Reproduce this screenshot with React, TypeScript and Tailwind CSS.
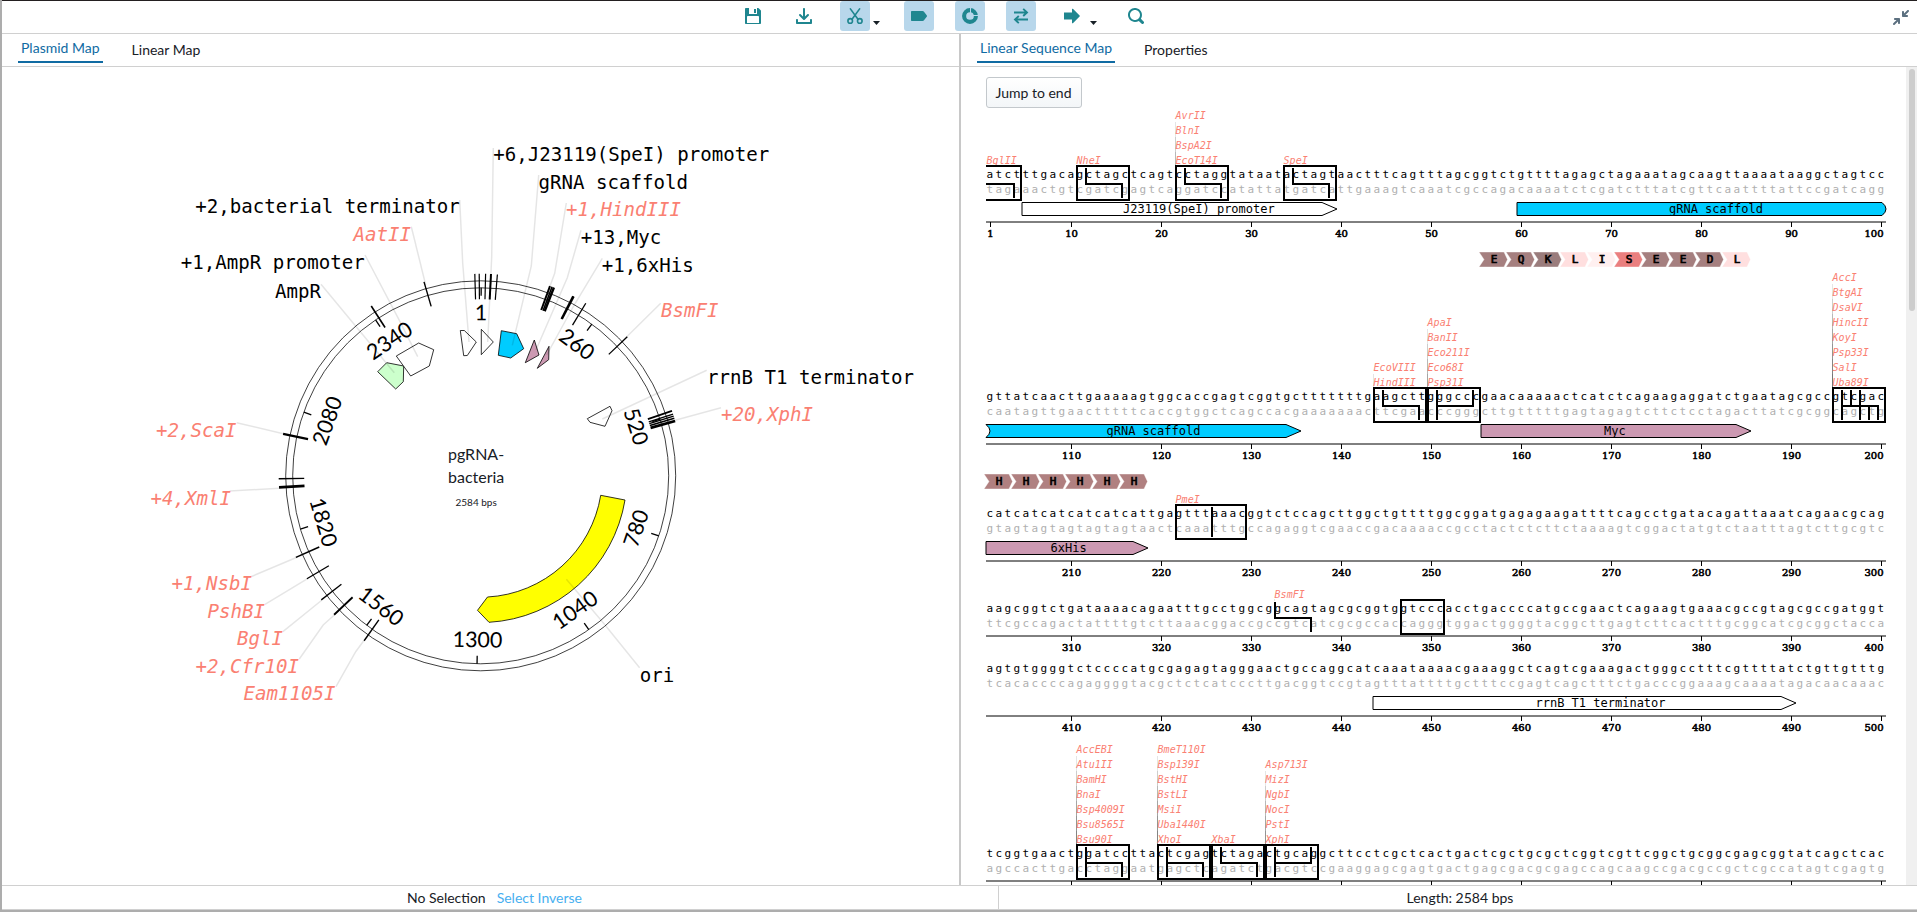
import React from "react";

const MONO = '"DejaVu Sans Mono", monospace';
const SERIF = '"DejaVu Serif", serif';
const LATO = "Lato, sans-serif";
const SALMON = "#fa8072";
const TEAL = "#1f868f";

/* ---------- toolbar ---------- */

function Glyph({ d, size = 16, color = TEAL }: { d: string; size?: number; color?: string }) {
  return (
    <svg width={size} height={size} viewBox="0 0 16 16" fill={color} fillRule="evenodd">
      <path d={d} />
    </svg>
  );
}

const ICONS = {
  save: "M15.71 2.29l-2-2A.997.997 0 0013 0h-1v6H4V0H1C.45 0 0 .45 0 1v14c0 .55.45 1 1 1h14c.55 0 1-.45 1-1V3c0-.28-.11-.53-.29-.71zM14 15H2V9c0-.55.45-1 1-1h10c.55 0 1 .45 1 1v6zM11 1H9v4h2V1z",
  download:
    "M7.29 11.71c.18.18.43.29.71.29s.53-.11.71-.29l4-4a1.003 1.003 0 00-1.42-1.42L9 8.59V1c0-.55-.45-1-1-1S7 .45 7 1v7.59l-2.29-2.3a1.003 1.003 0 00-1.42 1.42l4 4zM15 11c-.55 0-1 .45-1 1v2H2v-2c0-.55-.45-1-1-1s-1 .45-1 1v3c0 .55.45 1 1 1h14c.55 0 1-.45 1-1v-3c0-.55-.45-1-1-1z",
  tag: "M1 3h10.6c.5 0 .9.2 1.2.5l2.9 3.7c.4.5.4 1.1 0 1.6l-2.9 3.7c-.3.3-.7.5-1.2.5H1c-.6 0-1-.4-1-1V4c0-.6.4-1 1-1z",
  search:
    "M15.55 13.43l-2.67-2.68a6.94 6.94 0 001.11-3.76c0-3.87-3.13-7-7-7s-7 3.13-7 7 3.13 7 7 7c1.39 0 2.68-.42 3.76-1.11l2.68 2.67a1.498 1.498 0 102.12-2.12zm-8.56-1.44c-2.76 0-5-2.24-5-5s2.24-5 5-5 5 2.24 5 5-2.24 5-5 5z",
  arrow: "M0 4.6h8V1.2c0-.5.5-.7.9-.4l6.7 6.6c.4.3.4.8 0 1.2l-6.7 6.6c-.4.3-.9.1-.9-.4v-3.4H0z",
  minimize:
    "M6 8H2c-.55 0-1 .45-1 1s.45 1 1 1h1.590L.29 13.290a1.003 1.003 0 001.420 1.420L5 11.410V13c0 .55.45 1 1 1s1-.45 1-1V9c0-.55-.45-1-1-1zm9.710-7.710a1.003 1.003 0 00-1.420 0L11 3.590V2c0-.55-.45-1-1-1s-1 .45-1 1v4c0 .55.45 1 1 1h4c.55 0 1-.45 1-1s-.45-1-1-1h-1.590l3.300-3.290c.39-.39.39-1.030 0-1.420z",
};

function Scissors() {
  return (
    <svg width="16" height="16" viewBox="0 0 16 16" fill="none" stroke={TEAL} strokeWidth="1.6">
      <path d="M3 0.400L10.800 11M13 0.400L5.200 11" />
      <circle cx="3.200" cy="12.900" r="2.300" />
      <circle cx="12.800" cy="12.900" r="2.300" />
    </svg>
  );
}

function Donut() {
  return (
    <svg width="16" height="16" viewBox="0 0 16 16" fill="none">
      <circle cx="8" cy="8" r="5.900" stroke={TEAL} strokeWidth="4.100" />
      <path d="M8.500 0V5M11 7.500H16" stroke="#b8d7eb" strokeWidth="1" />
    </svg>
  );
}

function Swap() {
  return (
    <svg width="16" height="16" viewBox="0 0 16 16" fill="none" stroke={TEAL} strokeWidth="1.900">
      <path d="M1 4.500H13.500M10.200 0.900L14 4.500L10.200 8M15 11.500H2.500M5.800 8L2 11.500L5.800 15.100" />
    </svg>
  );
}

function ToolButton({ active = false, children }: { active?: boolean; children: React.ReactNode }) {
  return (
    <button
      className={
        active
          ? "flex h-[30px] w-[30px] items-center justify-center rounded-[3px] bg-[#b8d7eb]"
          : "flex h-[30px] w-[30px] items-center justify-center rounded-[3px]"
      }
    >
      {children}
    </button>
  );
}

function Caret() {
  return (
    <svg width="7" height="4" viewBox="0 0 7 4" className="mt-[14px]" fill="#182026">
      <path d="M0 0H7L3.500 4z" />
    </svg>
  );
}

function Toolbar() {
  return (
    <header className="flex h-[34px] shrink-0 border-t border-b border-t-[#231f20] border-b-[#d0d0d0]">
      <div className="flex flex-1 items-start pl-[736px]">
        <ToolButton>
          <Glyph d={ICONS.save} />
        </ToolButton>
        <div className="ml-[21px]">
          <ToolButton>
            <Glyph d={ICONS.download} />
          </ToolButton>
        </div>
        <div className="ml-[21px] flex items-center gap-[3px]">
          <ToolButton active>
            <Scissors />
          </ToolButton>
          <Caret />
        </div>
        <div className="ml-[24px] flex gap-[21px]">
          <ToolButton active>
            <Glyph d={ICONS.tag} />
          </ToolButton>
          <ToolButton active>
            <Donut />
          </ToolButton>
          <ToolButton active>
            <Swap />
          </ToolButton>
        </div>
        <div className="ml-[21px] flex items-center gap-[3px]">
          <ToolButton>
            <Glyph d={ICONS.arrow} />
          </ToolButton>
          <Caret />
        </div>
        <div className="ml-[24px]">
          <ToolButton>
            <Glyph d={ICONS.search} />
          </ToolButton>
        </div>
      </div>
      <div className="pt-[9px] pr-[8px]">
        <Glyph d={ICONS.minimize} color="#5c7080" />
      </div>
    </header>
  );
}

function Tabs({ active, other }: { active: string; other: string }) {
  return (
    <nav className="flex h-[33px] shrink-0 items-start gap-[26px] border-b border-[#d0d0d0] pl-4 text-[14px]">
      <button className="h-[29px] border-b-2 border-[#106ba3] px-[3px] text-[#106ba3]">
        <span className="block h-[27px] leading-[28px]">{active}</span>
      </button>
      <button className="h-[32px] px-[3px] leading-[32px] text-[#182026]">{other}</button>
    </nav>
  );
}

/* ---------- plasmid map ---------- */

const CX = 480.7;
const CY = 475.8;
const BP = 2584;

const at = (bp: number, r: number) => {
  const a = (bp / BP) * 2 * Math.PI;
  return [CX + r * Math.sin(a), CY - r * Math.cos(a)];
};

const AXIS_TICKS = [1, 260, 520, 780, 1040, 1300, 1560, 1820, 2080, 2340];

const CUTS: [number, number][] = [
  [2572, 1.2], [2581, 1.2], [10, 1.2], [21, 2], [34, 1.2],
  [144, 2], [148.5, 1.6], [152.5, 2.4],
  [195, 1.6], [197, 1.8], [225, 1.3], [334, 1.3],
  [511.5, 1.8], [518.5, 1.4], [522.5, 1.4], [527, 1.5], [533, 2.8],
  [1545, 1.4], [1626, 1.8], [1666, 1.3], [1718, 1.3], [1767, 1.6],
  [1914.5, 2.6], [1932, 1.5], [2024, 2.2], [2348.5, 1.6], [2467, 1.4],
];

const LEADERS = [
  "493.3,148 491.7,257 487.7,342",
  "459.7,200 462.7,263 469,342",
  "538.7,175 531.3,266 512.3,345.3",
  "566.3,203 554.7,273.3 549.3,288",
  "581,230.3 567.3,277.7 536,350",
  "602.3,258.3 573,307 546.7,355",
  "660.7,303.3 621.7,341.7",
  "706.7,370.3 602.3,419",
  "721,407.7 673.3,420.7",
  "639.6,667.7 603.2,622.7 566.4,579.3",
  "411.3,226.7 425.7,285",
  "365,255 398.3,318.3 417.7,356.7",
  "321,284.3 394.3,372.7",
  "236.7,422.7 283.3,433.7",
  "229.6,491 279.3,488.3",
  "251,576.7 297,557.3",
  "265,604.3 308,578.3",
  "282.9,631.7 322,600",
  "299.3,659 323.2,625 334.6,614.7",
  "336,686.7 355.7,651.7 364.3,640",
];

const LABELS: { t: string; x: number; y: number; end?: boolean; cut?: boolean }[] = [
  { t: "+6,J23119(SpeI) promoter", x: 493.3, y: 161 },
  { t: "gRNA scaffold", x: 538.5, y: 189 },
  { t: "+1,HindIII", x: 566, y: 216, cut: true },
  { t: "+13,Myc", x: 580.7, y: 244 },
  { t: "+1,6xHis", x: 601.7, y: 272 },
  { t: "BsmFI", x: 661, y: 317, cut: true },
  { t: "rrnB T1 terminator", x: 707, y: 384 },
  { t: "+20,XphI", x: 721, y: 421, cut: true },
  { t: "ori", x: 639.7, y: 682 },
  { t: "+2,bacterial terminator", x: 459.7, y: 212.7, end: true },
  { t: "AatII", x: 411, y: 240.5, end: true, cut: true },
  { t: "+1,AmpR promoter", x: 364.8, y: 268.7, end: true },
  { t: "AmpR", x: 321, y: 297.7, end: true },
  { t: "+2,ScaI", x: 236.5, y: 436.7, end: true, cut: true },
  { t: "+4,XmlI", x: 231, y: 505, end: true, cut: true },
  { t: "+1,NsbI", x: 252, y: 590, end: true, cut: true },
  { t: "PshBI", x: 265, y: 618, end: true, cut: true },
  { t: "BglI", x: 283, y: 645, end: true, cut: true },
  { t: "+2,Cfr10I", x: 299, y: 673, end: true, cut: true },
  { t: "Eam1105I", x: 335.5, y: 700, end: true, cut: true },
];

const SHAPES: [string, string][] = [
  ["460.3,330.5 464.3,330.5 476.3,342 467.3,355.5 463.7,355.7", "#fff"],
  ["481.3,329.3 493.3,342 481.3,354.7", "#fff"],
  ["501.3,330.7 516.7,333.7 523.7,348.7 510.7,358 498.3,355.3", "#00ccff"],
  ["534.3,340 539,355 525.3,362.7", "#cc99b2"],
  ["549,346.3 548.7,359.7 537.3,368.3", "#cc99b2"],
  ["610,406.3 612,410.7 605,426.3 590,422.3 587.3,418.7", "#fff"],
  ["377.7,371.7 386.7,362.7 403.7,366 403.3,381.7 395.7,389", "#ccffcc"],
  ["396.3,356 418.7,343 433.7,349.7 429.3,366 410.7,376", "#fff"],
];

function PlasmidMap() {
  return (
    <svg width="957" height="818" viewBox="2 67 957 818" className="block">
      <g fill="none" stroke="#000" strokeWidth="0.75">
        <circle cx={CX} cy={CY} r="195" />
        <circle cx={CX} cy={CY} r="188" />
      </g>
      {AXIS_TICKS.map((bp) => {
        const [x1, y1] = at(bp, 188);
        const [x2, y2] = at(bp, 180);
        const deg = (bp / BP) * 360;
        const flip = deg > 90 && deg < 270;
        return (
          <g key={bp}>
            <line x1={x1} y1={y1} x2={x2} y2={y2} stroke="#000" strokeWidth="1.3" />
            <g transform={`translate(${CX} ${CY}) rotate(${deg}) translate(0 -163.500) rotate(${flip ? 180 : 0})`}>
              <text y="8" textAnchor="middle" fontFamily={LATO} fontSize="21.500" fill="#000">
                {bp}
              </text>
            </g>
          </g>
        );
      })}
      {SHAPES.map(([points, fill]) => (
        <polygon key={points} points={points} fill={fill} stroke="#000" strokeWidth="0.8" />
      ))}
      <path
        d="M600.7 495.3L625 500A146.500 146.500 0 0 1 489 622.300L477.500 610.300L487.500 597A121.500 121.500 0 0 0 600.700 495.300Z"
        fill="#ffff00"
        stroke="#000"
        strokeWidth="0.8"
      />
      {LEADERS.map((p) => (
        <polyline key={p} points={p} fill="none" stroke="#000" strokeOpacity="0.1" strokeWidth="1.500" />
      ))}
      {CUTS.map(([bp, w]) => {
        const [x1, y1] = at(bp, 176.5);
        const [x2, y2] = at(bp, 202);
        return <line key={bp} x1={x1} y1={y1} x2={x2} y2={y2} stroke="#000" strokeWidth={w} />;
      })}
      {LABELS.map((l) => (
        <text
          key={l.t}
          x={l.x}
          y={l.y}
          textAnchor={l.end ? "end" : "start"}
          fontFamily={MONO}
          fontSize="19.100"
          fontStyle={l.cut ? "italic" : "normal"}
          fill={l.cut ? SALMON : "#000"}
        >
          {l.t}
        </text>
      ))}
      <g fontFamily={LATO} fill="#182026">
        <text x="448" y="460" fontSize="16">pgRNA-</text>
        <text x="448" y="483" fontSize="16">bacteria</text>
        <text x="455.500" y="506" fontSize="10">2584 bps</text>
      </g>
    </svg>
  );
}

/* ---------- sequence rows ---------- */

interface Site {
  names?: string[];
  from: number;
  to: number;
  box?: boolean;
  open?: boolean;
  top?: number[];
  bottom?: number[];
}

interface Feature {
  name: string;
  from: number;
  to: number;
  color: string;
  textX: number;
  cutStart?: boolean;
  cutEnd?: boolean;
}

interface Row {
  start: number;
  up: number;
  height: number;
  seq: string;
  sites: Site[];
  features?: Feature[];
  aa?: { x: number; y: number; letters: string };
  hideNumbers?: boolean;
}

const AA_COLORS: Record<string, string> = {
  E: "#a57f7f",
  Q: "#a57f7f",
  K: "#9a7c7c",
  L: "#ffdfdf",
  I: "#fff0f0",
  S: "#ea7f7f",
  D: "#a57f7f",
  H: "#b08080",
};

const ROWS: Row[] = [
  {
    start: 0,
    up: 70,
    height: 132,
    seq: "atctttgacagctagctcagtcctaggtataatactagtaactttcagtttagcggtctgttttagagctagaaatagcaagttaaaataaggctagtcc",
    sites: [
      { names: ["BglII"], from: 0, to: 4, open: true, bottom: [3] },
      { names: ["NheI"], from: 10, to: 16, top: [11], bottom: [15] },
      { names: ["AvrII", "BlnI", "BspA2I", "EcoT14I"], from: 21, to: 27, top: [22], bottom: [26] },
      { names: ["SpeI"], from: 33, to: 39, top: [34], bottom: [38] },
    ],
    features: [
      { name: "J23119(SpeI) promoter", from: 4, to: 39, color: "#fff", textX: 137 },
      { name: "gRNA scaffold", from: 59, to: 100, color: "#00ccff", textX: 683, cutEnd: true },
    ],
  },
  {
    start: 100,
    up: 160,
    height: 225,
    seq: "gttatcaacttgaaaaagtggcaccgagtcggtgctttttttgaagcttgggcccgaacaaaaactcatctcagaagaggatctgaatagcgccgtcgac",
    sites: [
      { names: ["EcoVIII", "HindIII"], from: 43, to: 49, top: [44], bottom: [48] },
      { names: ["ApaI", "BanII", "Eco211I", "Eco68I", "Psp31I"], from: 49, to: 55, top: [50, 54], bottom: [50] },
      {
        names: ["AccI", "BtgAI", "DsaVI", "HincII", "KoyI", "Psp33I", "SalI", "Uba89I"],
        from: 94,
        to: 100,
        top: [95, 96, 97],
        bottom: [95, 97, 98, 99],
      },
    ],
    features: [
      { name: "gRNA scaffold", from: 0, to: 35, color: "#00ccff", textX: 120.5, cutStart: true },
      { name: "Myc", from: 55, to: 85, color: "#cc99b2", textX: 618 },
    ],
    aa: { x: 493, y: -148, letters: "EQKLISEEDL" },
  },
  {
    start: 200,
    up: 52,
    height: 115,
    seq: "catcatcatcatcatcattgagtttaaacggtctccagcttggctgttttggcggatgagagaagattttcagcctgatacagattaaatcagaacgcag",
    sites: [{ names: ["PmeI"], from: 21, to: 29, top: [25], bottom: [25] }],
    features: [{ name: "6xHis", from: 0, to: 18, color: "#cc99b2", textX: 64.5 }],
    aa: { x: -2, y: -43, letters: "HHHHHH" },
  },
  {
    start: 300,
    up: 32,
    height: 75,
    seq: "aagcggtctgataaaacagaatttgcctggcggcagtagcgcggtggtcccacctgaccccatgccgaactcagaagtgaaacgccgtagcgccgatggt",
    sites: [
      { names: ["BsmFI"], from: 32, to: 36, box: false, top: [32], bottom: [36] },
      { from: 46, to: 51 },
    ],
  },
  {
    start: 400,
    up: 17,
    height: 80,
    seq: "agtgtggggtctccccatgcgagagtagggaactgccaggcatcaaataaaacgaaaggctcagtcgaaagactgggcctttcgttttatctgttgtttg",
    sites: [],
    features: [{ name: "rrnB T1 terminator", from: 43, to: 90, color: "#fff", textX: 549.5 }],
  },
  {
    start: 500,
    up: 122,
    height: 150,
    seq: "tcggtgaactggatccttactcgagtctagactgcaggcttcctcgctcactgactcgctgcgctcggtcgttcggctgcggcgagcggtatcagctcac",
    sites: [
      { names: ["AccEBI", "Atu1II", "BamHI", "BnaI", "Bsp4009I", "Bsu8565I", "Bsu90I"], from: 10, to: 16, top: [11], bottom: [11, 15] },
      { names: ["BmeT110I", "Bsp139I", "BstHI", "BstLI", "MsiI", "Uba1440I", "XhoI"], from: 19, to: 25, top: [20], bottom: [20, 24] },
      { names: ["XbaI"], from: 25, to: 31, top: [26], bottom: [30] },
      { names: ["Asp713I", "MizI", "NgbI", "NocI", "PstI", "XphI"], from: 31, to: 37, top: [32, 36], bottom: [32] },
    ],
    hideNumbers: true,
  },
];

const COMPLEMENT: Record<string, string> = { a: "t", t: "a", g: "c", c: "g" };
const complement = (s: string) => s.split("").map((c) => COMPLEMENT[c]).join("");
const W = 9;
const COLUMNS = Array.from({ length: 100 }, (_, i) => i * W + 0.5).join(" ");

function CutSite({ site }: { site: Site }) {
  const { names = [], from, to, box = true, open, top = [], bottom = [] } = site;
  const x = from * W;
  const w = (to - from) * W;
  const marks = [...top, ...bottom];
  const lo = open ? 0 : Math.min(...marks) * W;
  const hi = Math.max(...marks) * W + 2;
  return (
    <g>
      {names.map((n, i) => {
        const y = -14 - 15 * (names.length - 1 - i);
        return (
          <g key={n}>
            {(i < names.length - 1 || !box) && (
              <line x1={x + 0.5} x2={x + 0.5} y1={y + 3} y2={-13} stroke="#000" strokeOpacity="0.1" />
            )}
            <text x={x + 0.6} y={y} fontFamily={MONO} fontSize="10" fontStyle="italic" fill={SALMON}>
              {n}
            </text>
          </g>
        );
      })}
      {box && !open && <rect x={x + 1} y={-12} width={w - 2} height={34} fill="none" stroke="#000" strokeWidth="2" />}
      {box && open && <path d={`M0 -12H${w - 1}V22H0`} fill="none" stroke="#000" strokeWidth="2" />}
      {top.map((c) => (
        <rect key={`t${c}`} x={c * W} y={-10} width="2" height="16" />
      ))}
      {bottom.map((c) => (
        <rect key={`b${c}`} x={c * W} y={6} width="2" height="14" />
      ))}
      {hi - lo > 2 && marks.length > 0 && <rect x={lo} y={5} width={hi - lo} height="2" />}
    </g>
  );
}

function FeatureArrow({ f }: { f: Feature }) {
  const a = f.from * W;
  const b = f.to * W;
  const head = f.cutEnd ? `H${b - 4}Q${b + 4} 31 ${b - 4} 37.500Z` : `H${b - 15}L${b} 31L${b - 15} 37.500Z`;
  const tail = f.cutStart ? `M${a} 37.500Q${a + 8} 31 ${a} 24.500` : `M${a} 37.500V24.500`;
  return (
    <g>
      <path d={tail + head} fill={f.color} stroke="#000" strokeWidth="1" />
      <text x={f.textX} y={35} fontFamily={MONO} fontSize="12" fill="#000">
        {f.name}
      </text>
    </g>
  );
}

function SequenceRow({ row }: { row: Row }) {
  const features = row.features ?? [];
  const axisY = features.length > 0 ? 44 : 24;
  const tens = Array.from({ length: 10 }, (_, i) => (i + 1) * 10);
  const ticks = row.start === 0 ? [1, ...tens] : tens;
  return (
    <svg width="900" height={row.height} viewBox={`0 ${-row.up} 900 ${row.height}`} className="block overflow-visible">
      {row.aa && (
        <g transform={`translate(${row.aa.x} ${row.aa.y})`}>
          {row.aa.letters.split("").map((l, i) => (
            <g key={i} transform={`translate(${i * 27} 0)`}>
              <path d="M0 0H25L28.500 7.500L25 15H0L5 7.500Z" fill={AA_COLORS[l]} stroke="#fff" strokeWidth="0.400" />
              <text x="15" y="11" textAnchor="middle" fontFamily={MONO} fontSize="11" stroke="#000" strokeWidth="0.700">
                {l}
              </text>
            </g>
          ))}
        </g>
      )}
      <text x={COLUMNS} y="0" fontFamily={MONO} fontSize="11" fill="#000">
        {row.seq}
      </text>
      <text x={COLUMNS} y="15" fontFamily={MONO} fontSize="11" fill="#b0b0b0">
        {complement(row.seq)}
      </text>
      {row.sites.map((s) => (
        <CutSite key={s.from} site={s} />
      ))}
      {features.map((f) => (
        <FeatureArrow key={f.from} f={f} />
      ))}
      <line x1="0" x2="900" y1={axisY} y2={axisY} stroke="#000" />
      {ticks.map((t) => {
        const x = (t - 0.5) * W;
        return (
          <g key={t}>
            <line x1={x} x2={x} y1={axisY} y2={axisY + 5} stroke="#000" />
            {!row.hideNumbers && (
              <text
                x={t === 100 ? x - 7.5 : x}
                y={axisY + 15}
                textAnchor="middle"
                fontFamily={SERIF}
                fontSize="10"
                stroke="#000"
                strokeWidth="0.600"
              >
                {row.start + t}
              </text>
            )}
          </g>
        );
      })}
    </svg>
  );
}

function SequencePanel() {
  return (
    <div className="flex min-h-0 flex-1 overflow-hidden">
      <div className="flex-1 overflow-hidden pt-[10px] pl-[25px]">
        <button className="block h-[31px] w-24 rounded-[3px] border border-[#c3c8cc] bg-linear-to-b from-white to-[#f3f6f8] pr-[1px] text-[14px] text-[#182026]">
          Jump to end
        </button>
        {ROWS.map((r) => (
          <SequenceRow key={r.start} row={r} />
        ))}
      </div>
      <div className="w-[11px] bg-[#f0f0f0] pt-[2px] pl-[3px]">
        <div className="h-[242px] w-[6px] rounded-full bg-[#cdcdcd]" />
      </div>
    </div>
  );
}

function StatusBar() {
  return (
    <footer className="flex h-[25px] shrink-0 border-t border-b border-[#d0d0d0] text-[14px] leading-[24px] text-[#182026]">
      <div className="flex w-[997px] justify-center gap-[11px] border-r border-[#d0d0d0] pr-[11px]">
        <span>No Selection</span>
        <span className="text-[#48aff0]">Select Inverse</span>
      </div>
      <div className="flex-1 pl-1 text-center">Length: 2584 bps</div>
    </footer>
  );
}

export default function App() {
  return (
    <div className="flex h-[912px] w-[1917px] flex-col overflow-hidden border-b-2 border-l-2 border-[#adadad] bg-white font-['Lato',sans-serif]">
      <Toolbar />
      <main className="flex min-h-0 flex-1">
        <section className="flex w-[957px] flex-col">
          <Tabs active="Plasmid Map" other="Linear Map" />
          <PlasmidMap />
        </section>
        <div className="w-[2px] bg-[#c8c8c8]" />
        <section className="flex min-w-0 flex-1 flex-col">
          <Tabs active="Linear Sequence Map" other="Properties" />
          <SequencePanel />
        </section>
      </main>
      <StatusBar />
    </div>
  );
}
